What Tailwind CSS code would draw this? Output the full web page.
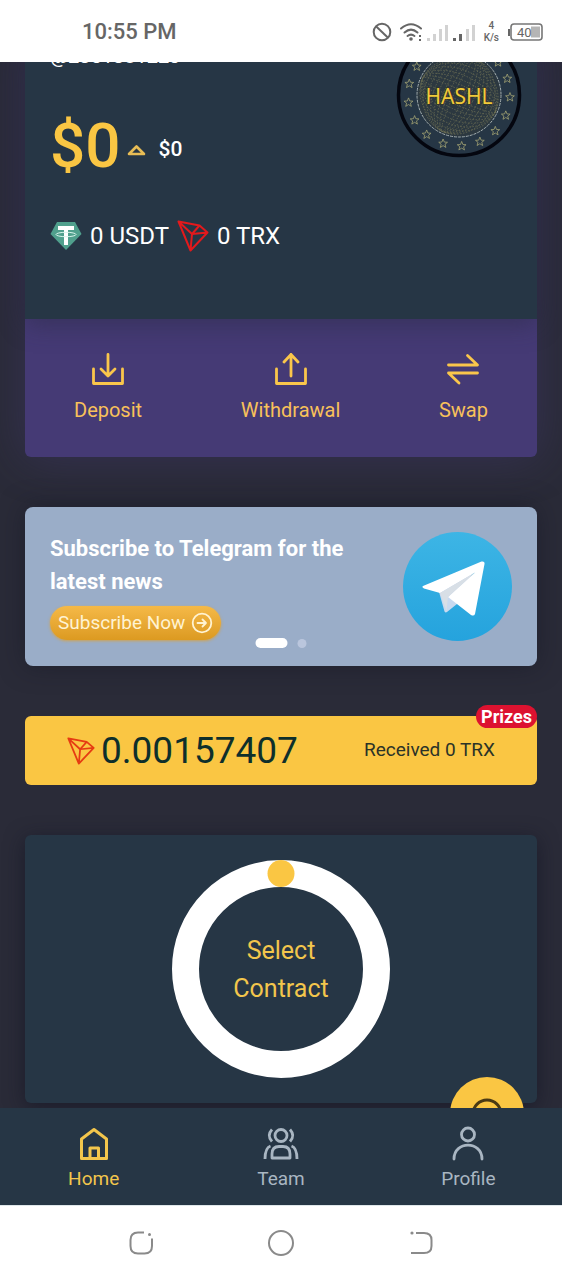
<!DOCTYPE html>
<html lang="en">
<head>
    <meta charset="UTF-8">
    <meta name="viewport" content="width=device-width, initial-scale=1.0">
    <title>Hashl Wallet</title>
    <script src="https://cdn.jsdelivr.net/npm/@tailwindcss/browser@4"></script>
</head>
<body class="flex flex-col h-screen overflow-hidden bg-[#2a2b38] font-['Roboto',sans-serif] text-white">

    <!-- Shared shapes -->
    <svg class="hidden" aria-hidden="true">
        <symbol id="trx" viewBox="0 0 32 32">
            <path d="M1.5 1.5 L22.5 5.5 L30.5 12.5 L13.5 30.5 Z M1.5 1.5 L15 14 L13.5 30.5 M15 14 L22.5 5.5 M15 14 L30.5 12.5" fill="none" stroke="currentColor" stroke-width="2" stroke-linejoin="round"/>
        </symbol>
        <symbol id="star" viewBox="-5 -5 10 10">
            <path d="M0 -4.5 L1.2 -1.4 L4.4 -1.2 L1.9 .8 L2.8 4 L0 2.2 L-2.8 4 L-1.9 .8 L-4.4 -1.2 L-1.2 -1.4 Z" fill="none" stroke="#a3a374" stroke-width=".8"/>
        </symbol>
    </svg>

    <!-- Status bar -->
    <header class="relative z-10 flex shrink-0 items-center justify-between h-[62px] bg-white pl-[82px] pr-[19px] pt-px text-[#666]">
        <time class="text-[22px] font-medium">10:55 PM</time>
        <div class="flex items-center gap-2">
            <svg class="w-5 h-5" viewBox="0 0 20 20" fill="none" stroke="#666" stroke-width="2"><circle cx="10" cy="10" r="8.3"/><path d="M4 4.2 L16 15.8"/></svg>
            <svg class="w-[76px] h-5" viewBox="0 0 76 20" fill="none">
                <g stroke="#666" stroke-width="2" stroke-linecap="round">
                    <path d="M1 6.5 Q11 -2 21 6.5"/><path d="M4.5 10.5 Q11 4.8 17.5 10.5"/><path d="M7.5 14 Q11 11.2 14.5 14"/>
                </g>
                <circle cx="11" cy="17" r="1.8" fill="#666"/>
                <path d="M19 13h2v2h-2z M19 17h2v2h-2z M53 16h3v3h-3z M59 12h3v7h-3z" fill="#666"/>
                <path d="M27 16h3v3h-3z M33 12h3v7h-3z M39 7h3v12h-3z M45 3h3v16h-3z M66 7h3v12h-3z M72 3h3v16h-3z" fill="#d2d2d2"/>
            </svg>
            <div class="flex flex-col items-center text-[10px] leading-[12px] font-medium"><span>4</span><span>K/s</span></div>
            <svg class="w-9 h-5" viewBox="0 0 36 20">
                <path d="M1 7h2v7H1z" fill="#666"/>
                <rect x="4" y="2" width="31" height="16" rx="3" fill="none" stroke="#777" stroke-width="1.6"/>
                <rect x="24" y="4.500" width="9" height="11" fill="#b5b5b5"/>
                <text x="10" y="15" font-size="13" fill="#666">40</text>
            </svg>
        </div>
    </header>

    <main class="relative flex-1 min-h-0 overflow-hidden px-[25px]">

        <!-- Balance card -->
        <section class="-mt-6 mb-[50px] rounded-md bg-[#453a75] shadow-[0_0_45px_rgba(69,58,117,0.45)]">
            <div class="relative h-[281px] bg-[#263645] px-[25px] pt-1 shadow-[0_6px_24px_rgba(38,40,60,0.45)]">
                <p class="text-[20px] leading-7">@2351381220</p>
                <div class="mt-11 flex items-center">
                    <span class="text-[62px] leading-16 font-medium text-[#fac643]">$0</span>
                    <svg class="ml-[6px] mt-2 w-5 h-4" viewBox="0 0 20 16" fill="none" stroke="#e8bd55" stroke-width="2.600" stroke-linejoin="round"><path d="M3 12 L10.500 4.500 L18 12 Z"/></svg>
                    <span class="ml-3 mt-2 text-[21px] font-medium">$0</span>
                </div>
                <div class="mt-10 flex items-center text-[24px] leading-9">
                    <svg class="mr-2 w-8 h-8" viewBox="0 0 32 32">
                        <path d="M7 2 H25 L31.500 14 L16 30 L.5 14 Z" fill="#50a08d"/>
                        <path d="M8 6 H24 V10 H18 V25 H14 V10 H8 Z" fill="#fff"/>
                        <ellipse cx="16" cy="14.500" rx="10" ry="2.200" fill="none" stroke="#d9f5ec" stroke-width="1"/>
                    </svg>
                    <span>0 USDT</span>
                    <svg class="mx-2 w-8 h-8 text-[#e3191c]"><use href="#trx"/></svg>
                    <span>0 TRX</span>
                </div>

                <!-- Coin -->
                <svg class="absolute top-[-6px] right-[15px] w-[126px] h-[126px]" viewBox="-63 -63 126 126">
                    <circle r="60.500" fill="#263645" stroke="#04060f" stroke-width="3.500"/>
                    <circle r="42" fill="#2c3840" stroke="#a5afb0" stroke-width="1" stroke-dasharray="3 1"/>
                    <g id="globe" fill="none" stroke="#6d6f55" stroke-width=".7" stroke-dasharray="1.500 1.500"></g>
                    <g id="stars"></g>
                    <text y="9" text-anchor="middle" font-family="Noto Sans" font-size="21" fill="#f0ca3c" stroke="#3b3515" stroke-width="1" paint-order="stroke">HASHL</text>
                </svg>
            </div>
            <div class="flex justify-between px-[49px] pt-[34px] pb-[33px] text-[20px] leading-7 text-[#f8c15a]">
                <button class="flex flex-col items-center gap-[11px]">
                    <svg class="w-8 h-8" viewBox="0 0 32 32" fill="none" stroke="#fac64b" stroke-width="2.800" stroke-linecap="round" stroke-linejoin="round"><path d="M1.500 16 V30.500 H30.500 V16 M16 1.500 V23 M9 16 L16 23 L23 16"/></svg>
                    Deposit
                </button>
                <button class="flex flex-col items-center gap-[11px]">
                    <svg class="w-8 h-8" viewBox="0 0 32 32" fill="none" stroke="#fac64b" stroke-width="2.800" stroke-linecap="round" stroke-linejoin="round"><path d="M1.500 16 V30.500 H30.500 V16 M16 23 V1.500 M9 9 L16 1.500 L23 9"/></svg>
                    Withdrawal
                </button>
                <button class="flex flex-col items-center gap-[11px]">
                    <svg class="w-8 h-8" viewBox="0 0 32 32" fill="none" stroke="#fac64b" stroke-width="2.800" stroke-linecap="round" stroke-linejoin="round"><path d="M1.500 12 H30.500 L20.500 2.500 M30.500 20 H1.500 L12 30"/></svg>
                    Swap
                </button>
            </div>
        </section>

        <!-- Telegram banner -->
        <section class="relative mb-[50px] flex items-start justify-between rounded-lg bg-[#9aadc8] p-[25px] shadow-[0_0_24px_rgba(20,22,36,0.5)]">
            <div>
                <h2 class="max-w-[310px] text-[22px] leading-[33px] font-bold">Subscribe to Telegram for the latest news</h2>
                <a href="#" class="mt-2 inline-flex h-[34px] items-center gap-[6px] rounded-full bg-linear-to-b from-[#f5b947] to-[#dc9a20] px-2 text-[19px] text-[#fff3d2] shadow-[0_1px_3px_rgba(222,160,50,0.8)]">
                    Subscribe Now
                    <svg class="w-[22px] h-[22px]" viewBox="0 0 22 22" fill="none" stroke="currentColor" stroke-width="1.800" stroke-linecap="round" stroke-linejoin="round"><circle cx="11" cy="11" r="9.300"/><path d="M6.500 11 H15 M11.500 7.500 L15 11 L11.500 14.500"/></svg>
                </a>
            </div>
            <svg class="w-[109px] h-[109px] shrink-0" viewBox="0 0 109 109">
                <defs><linearGradient id="sky" x2="0" y2="1"><stop stop-color="#3db5e5"/><stop offset="1" stop-color="#25a3dd"/></linearGradient></defs>
                <circle cx="54.500" cy="54.500" r="54.500" fill="url(#sky)"/>
                <path d="M36 60 L41.500 79.500 Q42.500 81 44 80 L54 72 L70 40 Z" fill="#c8d9ef"/>
                <path d="M20 54 L78.500 29.500 Q82 29 81.500 32 L72 82 Q71 84.500 68 83 L45 65 L72 40.500 L37 61 L21 56.500 Q18.500 55 20 54 Z" fill="#fff"/>
                <path d="M37 61 L72 40.500 L45 65 L43.500 79 Z" fill="#d8dfe6"/>
            </svg>
            <div class="absolute bottom-[18px] left-1/2 flex -translate-x-1/2 items-center gap-[10px]">
                <span class="w-8 h-[10px] rounded-full bg-white"></span>
                <span class="w-[9px] h-[9px] rounded-full bg-[#bac6dd]"></span>
            </div>
        </section>

        <!-- Prize counter -->
        <section class="relative mb-[50px] flex h-[69px] items-center justify-between rounded-md bg-[#fac643] px-[42px] text-[#0e2f2b]">
            <div class="flex items-center gap-[6px]">
                <svg class="w-7 h-7 text-[#e63b12]"><use href="#trx"/></svg>
                <span class="text-[37px]">0.00157407</span>
            </div>
            <span class="text-[19px] text-[#2b3328]">Received 0 TRX</span>
            <span class="absolute -top-[11px] right-0 rounded-full bg-[#dc1230] px-[5px] text-[18px] leading-[23px] font-bold text-white">Prizes</span>
        </section>

        <!-- Contract -->
        <section class="flex justify-center rounded-md bg-[#263645] p-[25px] shadow-[0_4px_20px_rgba(16,18,34,0.6)]">
            <button class="relative flex w-[218px] h-[218px] items-center justify-center rounded-full border-[27px] border-white pt-[2px] text-[25px] leading-[38px] text-[#f3c64c]">
                <span class="absolute -top-[27px] left-1/2 w-[27px] h-[27px] -translate-x-1/2 rounded-full bg-[#fac643]"></span>
                <span>Select<br>Contract</span>
            </button>
        </section>

        <button aria-label="Support" class="absolute -bottom-[43px] right-[38px] flex w-[74px] h-[74px] items-center justify-center rounded-full bg-[#fac643]">
            <svg class="w-8 h-8" viewBox="0 0 32 32" fill="none" stroke="#4a3a14" stroke-width="3"><circle cx="16" cy="16" r="14"/></svg>
        </button>
    </main>

    <!-- Tabs -->
    <nav class="relative z-10 grid shrink-0 grid-cols-3 h-[97px] bg-[#263645] pt-[18px] text-[19px] leading-6 text-[#a9b6c2]">
        <a href="#" class="flex flex-col items-center gap-[5px] text-[#f3c64c]">
            <svg class="w-9 h-9" viewBox="0 0 36 36" fill="none" stroke="currentColor" stroke-width="3" stroke-linejoin="round"><path d="M5.500 32.500 V13 L18 3.500 L30.500 13 V32.500 Z M14 32.500 V22 H22.500 V32.500"/></svg>
            Home
        </a>
        <a href="#" class="flex flex-col items-center gap-[5px]">
            <svg class="w-9 h-9" viewBox="0 0 36 36" fill="none" stroke="currentColor" stroke-width="2.800" stroke-linejoin="round"><circle cx="18" cy="9.500" r="6"/><path d="M9 32 V28 Q9 20.500 16 20.500 H20 Q27 20.500 27 28 V32 Z M9 3.500 Q3.500 9.500 9 15.500 M27 3.500 Q32.500 9.500 27 15.500 M7.500 20 Q2 22 2 33 M28.500 20 Q34 22 34 33"/></svg>
            Team
        </a>
        <a href="#" class="flex flex-col items-center gap-[5px]">
            <svg class="w-9 h-9" viewBox="0 0 36 36" fill="none" stroke="currentColor" stroke-width="2.800" stroke-linecap="round"><circle cx="18" cy="8.500" r="6.500"/><path d="M4 33 C4 14.500 32 14.500 32 33"/></svg>
            Profile
        </a>
    </nav>

    <!-- System buttons -->
    <footer class="relative z-10 flex shrink-0 items-center justify-center gap-28 h-[75px] border-t border-[#dfe7ea] bg-white text-[#8a8a8a]">
        <button aria-label="Recent apps"><svg class="w-7 h-7" viewBox="0 0 28 28" fill="none" stroke="currentColor" stroke-width="2"><path d="M17 3.500 H11 Q3.500 3.500 3.500 11 V17 Q3.500 24.500 11 24.500 H17.500 Q25 24.500 25 17 V9.500"/><circle cx="22.500" cy="5.500" r="1.500" fill="currentColor" stroke="none"/></svg></button>
        <button aria-label="Home screen"><svg class="w-7 h-7" viewBox="0 0 28 28" fill="none" stroke="currentColor" stroke-width="2"><circle cx="14" cy="14" r="12"/></svg></button>
        <button aria-label="Back"><svg class="w-7 h-7" viewBox="0 0 28 28" fill="none" stroke="currentColor" stroke-width="2"><path d="M9 4 H17 Q24.500 4 24.500 11 V17 Q24.500 24 17 24 H4"/><circle cx="5" cy="4" r="1.600" fill="currentColor" stroke="none"/></svg></button>
    </footer>

    <script>
        const stars = document.getElementById('stars');
        const globe = document.getElementById('globe');

        // Ring of stars around the coin
        let ring = '';
        for (let i = 0; i < 17; i++) {
            const a = (87 + i * 360 / 17) * Math.PI / 180;
            ring += `<use href="#star" x="${51 * Math.cos(a) - 5}" y="${51 * Math.sin(a) - 5}" width="10" height="10"/>`;
        }
        stars.innerHTML = ring;

        // Globe mesh
        let mesh = '';
        for (let i = 1; i < 8; i++) {
            mesh += `<ellipse rx="${i * 5}" ry="40" transform="rotate(25)"/><ellipse rx="40" ry="${i * 5}" transform="rotate(25)"/>`;
        }
        globe.innerHTML = mesh;
    </script>

</body>
</html>
